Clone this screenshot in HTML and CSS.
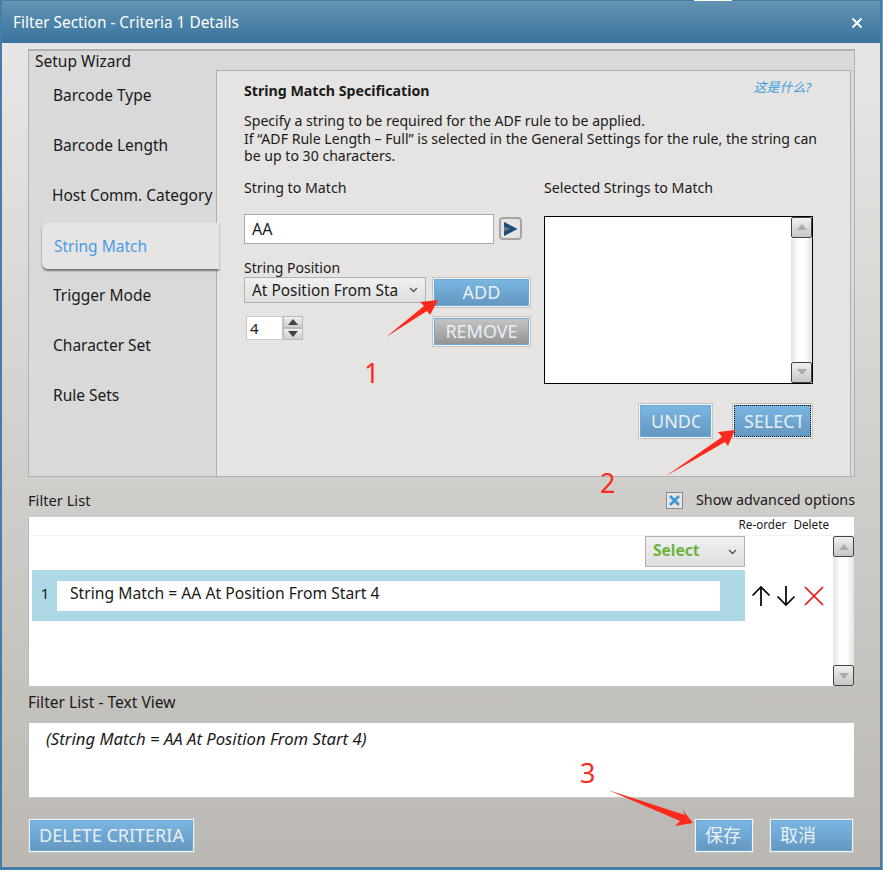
FILE: index.html
```html
<!DOCTYPE html>
<html lang="en">
<head>
  <meta charset="UTF-8" />
  <title>Filter Section - Criteria 1 Details</title>
  <link rel="stylesheet" href="styles.css">
</head>
<body>
  <div class="dialog">
    <div class="title-bar">
      <span>Filter Section - Criteria 1 Details</span>
      <svg class="close-icon" width="12" height="12" viewBox="0 0 12 12"><path d="M1.5 1.5l9 9M10.500 1.500l-9 9" stroke="#fff" stroke-width="1.8" fill="none"/></svg>
    </div>

    <div class="dialog-body">
      <div class="wizard">
        <div class="wizard-title">Setup Wizard</div>
        <div class="wizard-main">
          <ul class="steps">
            <li>Barcode Type</li>
            <li>Barcode Length</li>
            <li class="step-host">Host Comm. Category</li>
            <li class="step-active">String Match</li>
            <li>Trigger Mode</li>
            <li>Character Set</li>
            <li>Rule Sets</li>
          </ul>

          <div class="spec">
            <div class="spec-head">
              <h2>String Match Specification</h2>
              <a class="help-link">这是什么?</a>
            </div>
            <p class="spec-text">Specify a string to be required for the ADF rule to be applied.<br>If “ADF Rule Length – Full” is selected in the General Settings for the rule, the string can be up to 30 characters.</p>

            <div class="spec-columns">
              <div class="col-left">
                <div class="label-row">String to Match</div>
                <div class="input-row">
                  <div class="text-input">AA</div>
                  <div class="arrow-btn">
                    <svg width="15" height="16" viewBox="0 0 15 16"><path d="M1 1l13.500 7L1 15z" fill="#1a4d7c"/><path d="M1 5.500L7 8l-6 2.500z" fill="#77787a"/></svg>
                  </div>
                </div>
                <div class="position-label">String Position</div>
                <div class="position-row">
                  <div class="position-left">
                    <div class="select-box">
                      <span>At Position From Sta</span>
                      <svg width="9" height="6" viewBox="0 0 9 6"><path d="M1 1l3.500 3.500L8 1" stroke="#555" stroke-width="1.4" fill="none"/></svg>
                    </div>
                    <div class="spinner">
                      <div class="spinner-value">4</div>
                      <div class="spinner-btns">
                        <div class="spin-btn"><i class="tri-up"></i></div>
                        <div class="spin-btn"><i class="tri-down"></i></div>
                      </div>
                    </div>
                  </div>
                  <div class="position-btns">
                    <button class="btn btn-add">ADD</button>
                    <button class="btn btn-remove">REMOVE</button>
                  </div>
                </div>
              </div>

              <div class="col-right">
                <div class="label-row">Selected Strings to Match</div>
                <div class="listbox">
                  <div class="scrollbar">
                    <div class="scroll-btn"><i class="tri-up"></i></div>
                    <div class="scroll-track"></div>
                    <div class="scroll-btn"><i class="tri-down"></i></div>
                  </div>
                </div>
                <div class="list-btns">
                  <button class="btn btn-undo"><span>UNDO</span></button>
                  <button class="btn btn-select"><span>SELECT</span></button>
                </div>
              </div>
            </div>
          </div>
        </div>
      </div>

      <div class="filter-head">
        <span>Filter List</span>
        <label class="advanced">
          <svg width="17" height="17" viewBox="0 0 17 17"><rect x=".5" y=".5" width="16" height="16" fill="#e6e6e6" stroke="#8a8a8a"/><path d="M4 4l9 9M13 4l-9 9" stroke="#3f97d6" stroke-width="2.800" fill="none"/></svg>
          Show advanced options
        </label>
      </div>

      <div class="filter-list">
        <div class="filter-list-head"><span>Re-order</span><span>Delete</span></div>
        <div class="filter-list-body">
          <div class="filter-rows">
            <div class="select-green">
              <span>Select</span>
              <svg width="9" height="6" viewBox="0 0 9 6"><path d="M1 1l3.500 3.500L8 1" stroke="#555" stroke-width="1.4" fill="none"/></svg>
            </div>
            <div class="rule-line">
              <div class="rule">
                <div class="rule-num">1</div>
                <div class="rule-text">String Match = AA At Position From Start 4</div>
              </div>
              <div class="rule-actions">
                <svg width="20" height="22" viewBox="0 0 20 22"><path d="M10 21V2M1.500 10.500L10 2l8.500 8.500" stroke="#000" stroke-width="1.7" fill="none"/></svg>
                <svg width="20" height="22" viewBox="0 0 20 22"><path d="M10 1v19M1.500 11.500L10 20l8.500-8.500" stroke="#000" stroke-width="1.7" fill="none"/></svg>
                <svg class="delete-icon" width="20" height="20" viewBox="0 0 20 20"><path d="M1 1l18 18M19 1L1 19" stroke="#f01010" stroke-width="1.7" fill="none"/></svg>
              </div>
            </div>
          </div>
          <div class="scrollbar">
            <div class="scroll-btn"><i class="tri-up"></i></div>
            <div class="scroll-track"></div>
            <div class="scroll-btn"><i class="tri-down"></i></div>
          </div>
        </div>
      </div>

      <div class="text-view-label">Filter List - Text View</div>
      <div class="text-view">(String Match = AA At Position From Start 4)</div>

      <div class="footer">
        <button class="btn btn-delete">DELETE CRITERIA</button>
        <div class="footer-right">
          <button class="btn btn-save">保存</button>
          <button class="btn btn-cancel">取消</button>
        </div>
      </div>
    </div>
  </div>

  <!-- red annotations drawn on top of the screenshot -->
  <svg class="arrows" width="883" height="870" viewBox="0 0 883 870">
    <path d="M386 337L424 306 420 302 438 300 430 315 427 311z" fill="#fb2a1c"/>
    <path d="M666 476L722 437 718 432 735 430 728 446 725 442z" fill="#fb2a1c"/>
    <path d="M608 790L685 815 682 809 693 823 675 826 680 821z" fill="#fb2a1c"/>
  </svg>
  <span class="mark mark-1">1</span>
  <span class="mark mark-2">2</span>
  <span class="mark mark-3">3</span>
  <div class="top-sliver"></div>
</body>
</html>
```

FILE: styles.css
```css
* {
  box-sizing: border-box;
}

html, body {
  margin: 0;
  height: 100%;
}

body {
  font-family: "Noto Sans", "Noto Sans CJK SC", sans-serif;
  font-size: 14px;
  color: #1a1a1a;
  background: #7a9db6;
  overflow: hidden;
  position: relative;
}

.dialog {
  width: 882px;
  height: 870px;
  border: 2px solid #457da8;
  border-top: 0;
  border-bottom-width: 3px;
  display: flex;
  flex-direction: column;
}

.title-bar {
  height: 43px;
  flex: none;
  display: flex;
  align-items: center;
  justify-content: space-between;
  padding: 1px 17px 0 11px;
  color: #fff;
  font-size: 15.400px;
  border-top: 1px solid #457da8;
  background: linear-gradient(#6394b3, #38739d);
}

.dialog-body {
  flex: 1;
  padding: 6px 25px 0 26px;
  background: linear-gradient(#e8e7e5, #bbb8b3);
}

.wizard {
  height: 428px;
  border: 1px solid #b0b0b0;
  border-width: 2px 1px 1px 1px;
  background: #d9d9d9;
  display: flex;
  flex-direction: column;
}

.wizard-title {
  height: 19px;
  padding-left: 6px;
  line-height: 20px;
  font-size: 15.500px;
  flex: none;
}

.wizard-main {
  flex: 1;
  display: flex;
}

.steps {
  list-style: none;
  margin: 0;
  padding: 0;
  width: 187px;
  flex: none;
  font-size: 15.500px;
}

.steps li {
  height: 50px;
  line-height: 50px;
  padding-left: 24px;
}

.steps .step-host {
  padding-left: 23px;
}

.steps .step-active {
  width: 177px;
  height: 46px;
  line-height: 47px;
  margin: 3px 0 1px 13px;
  padding-left: 12px;
  color: #4a9be8;
  background: #e6e5e3;
  border-radius: 6px 0 0 6px;
  box-shadow: 0 2px 2px #77777a;
  position: relative;
  z-index: 1;
}

.spec {
  flex: 1;
  margin-right: 3px;
  padding: 9px 0 0 27px;
  background: #e5e4e2;
  border: 1px solid #b0b0b0;
  border-bottom: 0;
}

.spec-head {
  display: flex;
  justify-content: space-between;
  padding-right: 39px;
}

.spec-head h2 {
  margin: 0;
  font-size: 14.200px;
  line-height: 21px;
  font-weight: 700;
}

.help-link {
  color: #3f9ddc;
  font-size: 13px;
  font-style: italic;
  line-height: 15px;
}

.spec-text {
  margin: 11px 30px 0 0;
  line-height: 17.500px;
  font-size: 14.100px;
}

.spec-columns {
  display: flex;
  margin-top: 13px;
}

.col-left {
  width: 300px;
  flex: none;
}

.col-right {
  width: 269px;
  flex: none;
}

.label-row {
  height: 37px;
  line-height: 20px;
  font-size: 14.200px;
}

.input-row {
  display: flex;
  align-items: center;
  margin-top: -1px;
}

.text-input {
  width: 250px;
  height: 30px;
  line-height: 28px;
  padding-left: 7px;
  font-size: 16px;
  background: #fff;
  border: 1px solid #aaa;
}

.arrow-btn {
  width: 23px;
  height: 23px;
  margin-left: 5px;
  display: flex;
  align-items: center;
  justify-content: center;
  border: 2px solid #a5a5a5;
  border-radius: 4px;
}

.position-label {
  margin-top: 14px;
  height: 19px;
  line-height: 19px;
}

.position-row {
  display: flex;
  justify-content: space-between;
  width: 287px;
}

.position-left {
  width: 182px;
}

.select-box {
  height: 26px;
  padding: 1px 7px 0;
  display: flex;
  align-items: center;
  justify-content: space-between;
  font-size: 15.400px;
  border: 1px solid #b0b0b0;
  background: linear-gradient(#f1f1f1, #dedede);
}

.select-box span {
  white-space: nowrap;
  overflow: hidden;
  width: 150px;
}

.spinner {
  display: flex;
  margin: 13px 0 0 2px;
}

.spinner-value {
  width: 37px;
  height: 24px;
  line-height: 22px;
  padding-left: 3px;
  font-size: 15px;
  background: #fff;
  border: 1px solid #c8c8c8;
}

.spinner-btns {
  width: 20px;
}

.spin-btn {
  height: 12px;
  display: flex;
  align-items: center;
  justify-content: center;
  border: 1px solid #bbb;
  background: linear-gradient(#efefef, #cfcfcf);
}

.tri-up, .tri-down {
  width: 0;
  height: 0;
  border-left: 5px solid transparent;
  border-right: 5px solid transparent;
}

.tri-up {
  border-bottom: 6px solid #444;
}

.tri-down {
  border-top: 6px solid #444;
}

.position-btns {
  display: flex;
  flex-direction: column;
  gap: 8px;
  width: 99px;
}

.btn {
  display: block;
  font-family: inherit;
  font-size: 18px;
  line-height: 1;
  padding: 0 0 2px;
  color: #e9eff4;
  border: 1px solid #6aa9d8;
  background: linear-gradient(#7ab6e2, #6398c1);
  box-shadow: 0 0 0 1px #f2f2f2, 0 0 0 2px #c4c4c4;
  overflow: hidden;
}

.btn span {
  display: block;
  overflow: hidden;
}

.btn-add, .btn-remove {
  width: 95px;
  height: 27px;
  margin: 2px;
  padding-bottom: 0;
}

.btn-remove {
  background: linear-gradient(#c4c4c4, #949494);
}

.listbox {
  height: 168px;
  margin-top: 1px;
  display: flex;
  justify-content: flex-end;
  background: #fff;
  border: 1px solid #000;
}

.scrollbar {
  width: 21px;
  display: flex;
  flex-direction: column;
}

.scroll-btn {
  height: 21px;
  flex: none;
  display: flex;
  align-items: center;
  justify-content: center;
  border: 1px solid #444;
  border-radius: 2px;
  background: linear-gradient(#f0f0f0, #c6c6c6);
}

.scroll-btn .tri-up {
  border-bottom-color: #aaa;
}

.scroll-btn .tri-down {
  border-top-color: #aaa;
}

.scroll-track {
  flex: 1;
  background: linear-gradient(90deg, #e4e4e4, #fff 35%, #fff 65%, #e4e4e4);
}

.list-btns {
  display: flex;
  justify-content: flex-end;
  gap: 19px;
  margin-top: 19px;
}

.btn-undo, .btn-select {
  height: 32px;
  margin: 2px;
  padding-bottom: 0;
  text-align: left;
  white-space: nowrap;
}

.btn-undo {
  width: 71px;
  padding-left: 10px;
}

.btn-undo span {
  width: 49px;
}

.btn-select {
  width: 77px;
  padding-left: 9px;
  border: 1px dotted #111;
}

.btn-select span {
  width: 58px;
}

.filter-head {
  height: 40px;
  display: flex;
  align-items: center;
  justify-content: space-between;
  padding-top: 5px;
  font-size: 14.700px;
}

.advanced {
  display: flex;
  align-items: center;
  gap: 13px;
  font-size: 14.300px;
  line-height: 18px;
  padding-top: 1px;
}

.filter-list {
  height: 169px;
  margin-right: 1px;
  background: #fff;
  display: flex;
  flex-direction: column;
  border-left: 1px solid #bbb;
}

.filter-list-head {
  height: 19px;
  flex: none;
  display: flex;
  justify-content: flex-end;
  gap: 7px;
  padding-right: 25px;
  font-size: 11.700px;
  line-height: 15px;
  border-bottom: 1px solid #f2f2f2;
}

.filter-list-body {
  flex: 1;
  display: flex;
  justify-content: space-between;
}

.filter-rows {
  width: 800px;
  padding-left: 3px;
}

.select-green {
  width: 100px;
  height: 31px;
  margin-left: 613px;
  padding: 0 7px 4px;
  display: flex;
  align-items: center;
  justify-content: space-between;
  color: #6cb33f;
  font-size: 15.500px;
  font-weight: 700;
  border: 1px solid #b0b0b0;
  background: linear-gradient(#f1f1f1, #dedede);
}

.select-green svg {
  margin-top: 4px;
}

.rule-line {
  display: flex;
  align-items: center;
  margin-top: 3px;
}

.rule {
  width: 713px;
  height: 51px;
  display: flex;
  align-items: center;
  padding-right: 25px;
  background: #add8e6;
}

.rule-num {
  width: 25px;
  text-align: center;
  padding: 0 0 5px 1px;
  font-size: 15px;
}

.rule-text {
  flex: 1;
  height: 30px;
  line-height: 24px;
  padding-left: 13px;
  font-size: 15.700px;
  background: #fff;
}

.rule-actions {
  display: flex;
  align-items: center;
  gap: 5px;
  margin-left: 6px;
}

.delete-icon {
  margin-left: 3px;
}

.text-view-label {
  height: 37px;
  line-height: 32px;
  font-size: 15.600px;
}

.text-view {
  height: 75px;
  margin-right: 1px;
  padding: 5px 0 0 17px;
  font-size: 16.700px;
  font-style: italic;
  line-height: 22px;
  background: #fff;
  border-left: 1px solid #bbb;
  border-bottom: 1px solid #ccc;
}

.footer {
  display: flex;
  justify-content: space-between;
  margin: 20px 1px 0 0;
  padding: 2px 2px 0;
}

.btn-delete {
  width: 163px;
  height: 31px;
}

.footer-right {
  display: flex;
  gap: 19px;
}

.btn-save, .btn-cancel {
  height: 31px;
  text-align: left;
  padding-left: 8px;
}

.btn-save {
  width: 56px;
}

.btn-cancel {
  width: 81px;
}

.arrows {
  position: absolute;
  left: 0;
  top: 0;
  pointer-events: none;
}

.mark {
  position: absolute;
  color: #fb2a1c;
  font-size: 27px;
  line-height: 30px;
}

.mark-1 {
  left: 364px;
  top: 358px;
}

.mark-2 {
  left: 600px;
  top: 468px;
}

.mark-3 {
  left: 580px;
  top: 758px;
}

.top-sliver {
  position: absolute;
  left: 694px;
  top: 0;
  width: 38px;
  height: 1px;
  background: #fff;
}
```
